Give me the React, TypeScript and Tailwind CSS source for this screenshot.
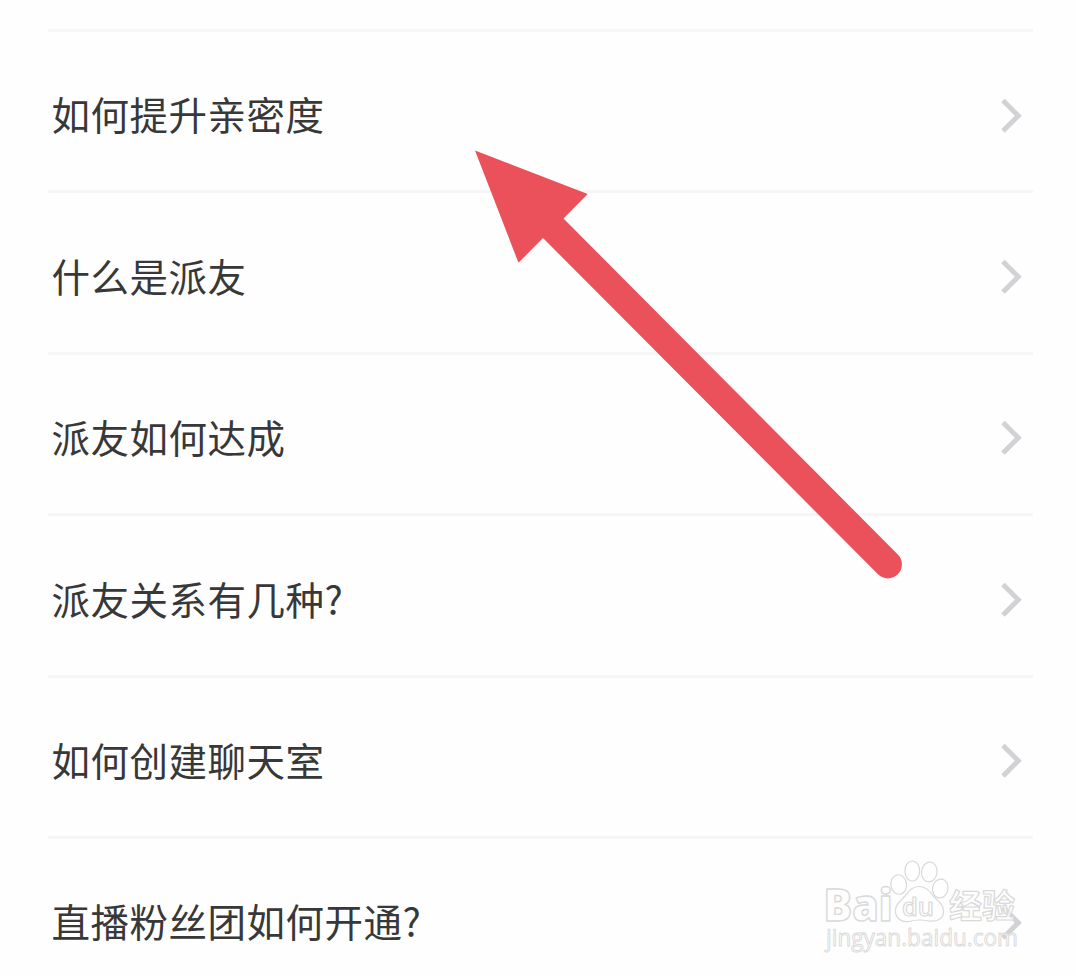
const questions = [
  '如何提升亲密度',
  '什么是派友',
  '派友如何达成',
  '派友关系有几种?',
  '如何创建聊天室',
  '直播粉丝团如何开通?',
]

function Chevron() {
  return (
    <svg width="24" height="40" viewBox="0 0 24 40" fill="none" className="shrink-0">
      <path d="M4 5.500L19.300 20.700L4 36" stroke="#d2d2d6" strokeWidth="5" />
    </svg>
  )
}

function Arrow() {
  return (
    <svg width="430" height="430" viewBox="474 150 430 430" className="absolute left-[474px] top-[150px]">
      <path
        d="M475 150.500L587.700 194L563.500 218.500L897.800 554.500A14 14 0 0 1 878 574.300L543 238L518.500 262.800Z"
        fill="#ea515b"
      />
    </svg>
  )
}

function Watermark() {
  return (
    <svg
      width="210"
      height="110"
      viewBox="820 856 210 110"
      fill="#ffffff"
      fillOpacity="0.75"
      stroke="#d9d9d9"
      strokeWidth="1.2"
      strokeLinejoin="round"
      className="absolute left-[820px] top-[856px]"
    >
      <text x="823.500" y="920.500" fontSize="44" strokeWidth="1.4" textLength="69" lengthAdjust="spacingAndGlyphs" className="font-['Open_Sans',sans-serif] font-extrabold">Bai</text>
      <path d="M919 886.500C927 886.500 930 892 934 897C939 902 944 905 943.500 912C943 919 937 922 929 921C922 919.500 916 919.500 909 921.500C901 922.500 895.500 918 895.500 911C895.500 904 900 902 905 896C909 891 912 886.500 919 886.500Z" />
      <ellipse cx="898.700" cy="884.500" rx="7.800" ry="9.800" transform="rotate(-8 898.700 884.500)" />
      <ellipse cx="912.300" cy="871" rx="7.400" ry="10" />
      <ellipse cx="929.300" cy="872" rx="7.700" ry="10" transform="rotate(8 929.300 872)" />
      <ellipse cx="940.300" cy="888.500" rx="7.700" ry="9.500" transform="rotate(12 940.300 888.500)" />
      <text x="902" y="916" fontSize="25" textLength="32" lengthAdjust="spacingAndGlyphs" className="font-['Open_Sans',sans-serif] font-semibold">du</text>
      <text x="949" y="918" fontSize="33" textLength="66" lengthAdjust="spacingAndGlyphs" className="font-['Noto_Sans_CJK_SC',sans-serif] font-bold">经验</text>
      <text x="826" y="946" fontSize="23" strokeWidth="0.9" textLength="192" lengthAdjust="spacingAndGlyphs" className="font-['Open_Sans',sans-serif]">jingyan.baidu.com</text>
    </svg>
  )
}

export default function App() {
  return (
    <div className="relative h-[976px] w-[1076px] overflow-hidden bg-[#fefefe] pt-[29px] font-['Noto_Sans_CJK_SC',sans-serif]">
      <ul className="ml-12 w-[985px]">
        {questions.map(q => (
          <li
            key={q}
            className="flex h-[161.400px] items-center justify-between border-t-[3px] border-[#f6f6f6] pl-[3.500px] pr-2.5 pt-[7px] text-[38.500px] tracking-[0.500px] text-[#383838]"
          >
            <span className="pb-0.5 leading-none">{q}</span>
            <Chevron />
          </li>
        ))}
      </ul>
      <Arrow />
      <Watermark />
    </div>
  )
}
